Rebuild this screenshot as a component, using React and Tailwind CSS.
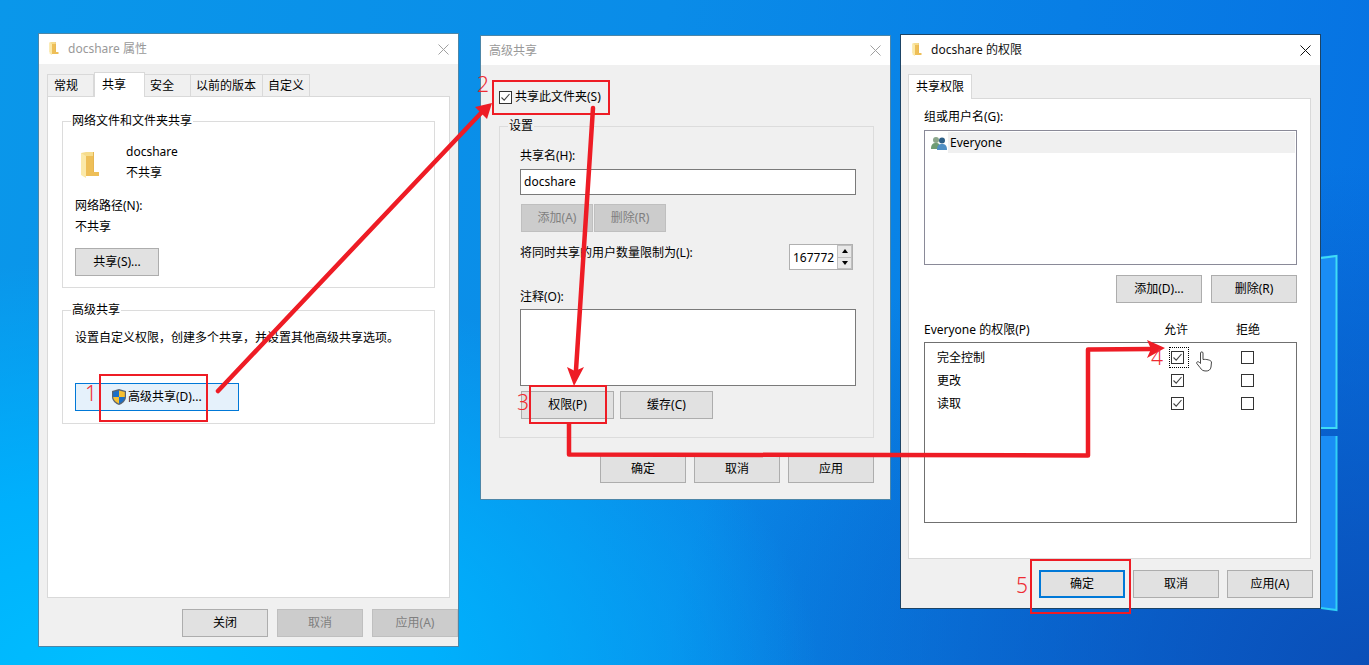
import React from 'react';

const btn = 'flex items-center justify-center h-[28px] border text-[12px] leading-none shrink-0';

function Btn({ w = 'w-[86px]', disabled, primary, children }) {
  const look = disabled
    ? 'bg-[#cccccc] border-[#bfbfbf] text-[#7f7f7f]'
    : primary
      ? 'bg-[#e1e1e1] border-2 border-[#0078d7] text-black'
      : 'bg-[#e1e1e1] border-[#adadad] text-black';
  return <div className={`${btn} ${w} ${look}`}>{children}</div>;
}

function FolderIcon({ className }) {
  return (
    <svg viewBox="0 0 18 26" className={className}>
      <path d="M0 1 L5 0 L12 0 L12 20 L0 20 Z" fill="#f6dc8c" />
      <path d="M0 1 L5 4 L5 26 L0 23 Z" fill="#fbe9a9" />
      <path d="M5 4 L13 4 L13 20 L18 20 L18 24 L5 24 Z" fill="#eebf58" />
      <path d="M12 0 L13 0 L13 20 L12 20 Z" fill="#e6b551" />
    </svg>
  );
}

function CloseX({ active }) {
  return (
    <svg viewBox="0 0 11 11" className="w-[11px] h-[11px]">
      <path d="M0.5 0.5 L10.5 10.5 M10.5 0.5 L0.5 10.5" stroke={active ? '#111111' : '#a0a0a0'} strokeWidth="1" fill="none" />
    </svg>
  );
}

function TitleBar({ title, icon, active, h = 'h-[30px]', xPad = 'pr-[9px]', left = 'pl-[10px]' }) {
  return (
    <div className={`${h} ${xPad} ${left} bg-white flex items-center`}>
      {icon && <FolderIcon className="w-[10px] h-[13px] mr-[9px] -mt-[2px]" />}
      <span className={`text-[12px] leading-none ${active ? 'text-[#111111]' : 'text-[#999999]'}`}>{title}</span>
      <div className="ml-auto">
        <CloseX active={active} />
      </div>
    </div>
  );
}

function Tab({ w, active, children }) {
  if (active) {
    return (
      <div className={`${w} h-[25px] relative z-10 bg-white border border-b-0 border-[#d9d9d9] pl-[7px] pt-[2px] text-[12px] leading-[20px] text-black`}>
        {children}
      </div>
    );
  }
  return (
    <div className={`${w} h-[23px] bg-[#f0f0f0] border border-l-0 border-[#d9d9d9] pl-[5px] text-[12px] leading-[21px] text-black`}>
      {children}
    </div>
  );
}

function Group({ label, h, className = '', children }) {
  return (
    <fieldset className={`border border-[#dcdcdc] ${h} ${className}`}>
      <legend className="ml-[8px] px-px text-[12px] leading-[16px] text-black">{label}</legend>
      {children}
    </fieldset>
  );
}

function Line({ className = '', children }) {
  return <div className={`h-[21px] text-[12px] leading-[21px] text-black ${className}`}>{children}</div>;
}

function Check({ checked, className = '' }) {
  return (
    <div className={`w-[13px] h-[13px] border border-[#333333] bg-white shrink-0 ${className}`}>
      {checked && (
        <svg viewBox="0 0 11 11" className="w-[11px] h-[11px]">
          <path d="M1.5 5.5 L4.2 8.2 L9.5 2" stroke="#444444" strokeWidth="1.1" fill="none" />
        </svg>
      )}
    </div>
  );
}

function PermRow({ label, focus }) {
  return (
    <div className="h-[23px] flex items-center pl-[12px]">
      <div className="w-[234px] text-[12px] leading-none text-black">{label}</div>
      <div className="relative">
        <Check checked />
        {focus && <div className="absolute -left-[2px] -top-[4px] w-[20px] h-[21px] border border-dotted border-black" />}
      </div>
      <Check className="ml-[57px]" />
    </div>
  );
}

function PropertiesWindow() {
  return (
    <div className="absolute left-[38px] top-[33px] w-[421px] h-[614px] border border-[#4c86a8] bg-[#f0f0f0]">
      <TitleBar title="docshare 属性" icon />
      <div className="pl-[8px] pt-[8px]">
        <div className="flex items-end h-[25px]">
          <div className="w-[47px] h-[23px] bg-[#f0f0f0] border border-[#d9d9d9] pl-[6px] text-[12px] leading-[21px] text-black">常规</div>
          <Tab w="w-[51px]" active>共享</Tab>
          <Tab w="w-[46px]">安全</Tab>
          <Tab w="w-[72px]">以前的版本</Tab>
          <Tab w="w-[47px]">自定义</Tab>
        </div>
        <div className="w-[403px] h-[502px] -mt-px border border-[#d9d9d9] bg-white px-[14px] pt-[16px]">
          <Group label="网络文件和文件夹共享" h="h-[175px]">
            <div className="pl-[18px] pt-[12px] flex">
              <FolderIcon className="w-[18px] h-[26px] mt-[11px]" />
              <div className="ml-[27px]">
                <Line>docshare</Line>
                <Line>不共享</Line>
              </div>
            </div>
            <div className="pl-[12px] pt-[12px]">
              <Line>网络路径(N):</Line>
              <Line>不共享</Line>
              <div className="mt-[11px]">
                <Btn w="w-[84px]">共享(S)...</Btn>
              </div>
            </div>
          </Group>
          <Group label="高级共享" h="h-[122px]" className="mt-[14px]">
            <div className="pl-[12px] pt-[9px]">
              <Line>设置自定义权限，创建多个共享，并设置其他高级共享选项。</Line>
              <div className="mt-[35px] w-[164px] h-[28px] border border-[#0078d7] bg-[#e5f1fb] flex items-center pl-[36px] text-[12px] leading-none text-black">
                <svg viewBox="0 0 14 16" className="w-[14px] h-[16px] mr-[2px] shrink-0">
                  <path d="M7 0 L14 2 L14 8 C14 12 10 15 7 16 C4 15 0 12 0 8 L0 2 Z" fill="#5a6470" />
                  <path d="M7 1.5 L7 8 L1.2 8 L1.2 3 Z" fill="#1b6fc8" />
                  <path d="M7 1.5 L12.8 3 L12.8 8 L7 8 Z" fill="#f7c031" />
                  <path d="M1.2 8 L7 8 L7 14.6 C4.5 13.6 1.4 11.4 1.2 8 Z" fill="#f7c031" />
                  <path d="M7 8 L12.8 8 C12.6 11.4 9.5 13.6 7 14.6 Z" fill="#1b6fc8" />
                </svg>
                高级共享(D)...
              </div>
            </div>
          </Group>
        </div>
        <div className="flex justify-end pr-px mt-[11px] w-[412px] gap-[9px]">
          <Btn>关闭</Btn>
          <Btn disabled>取消</Btn>
          <Btn disabled>应用(A)</Btn>
        </div>
      </div>
    </div>
  );
}

function AdvancedWindow() {
  return (
    <div className="absolute left-[480px] top-[35px] w-[411px] h-[465px] border border-[#4c86a8] bg-[#f0f0f0]">
      <TitleBar title="高级共享" h="h-[29px]" left="pl-[8px]" />
      <div className="pl-[18px] pt-[22px]">
        <div className="h-[20px] flex items-center text-[12px] leading-none text-black">
          <Check checked />
          <span className="ml-[3px]">共享此文件夹(S)</span>
        </div>
        <Group label="设置" h="h-[320px]" className="w-[375px] mt-[11px]">
          <div className="pl-[20px] pt-[11px]">
            <Line>共享名(H):</Line>
            <div className="mt-[3px] w-[336px] h-[26px] border border-[#7a7a7a] bg-white pl-[3px] text-[12px] leading-[24px] text-black">docshare</div>
            <div className="flex gap-px mt-[9px] pl-px">
              <Btn w="w-[72px]" disabled>添加(A)</Btn>
              <Btn w="w-[72px]" disabled>删除(R)</Btn>
            </div>
            <div className="flex mt-[12px] h-[26px]">
              <div className="w-[269px] text-[12px] leading-[18px] text-black">将同时共享的用户数量限制为(L):</div>
              <div className="w-[64px] h-[26px] border border-[#b0b0b0] bg-white flex">
                <div className="w-[47px] pl-[3px] text-[12px] leading-[26px] text-black overflow-hidden">167772</div>
                <div className="flex-1 flex flex-col bg-[#f0f0f0]">
                  <div className="flex-1 border border-[#c0c0c0] bg-[#e8e8e8] flex items-center justify-center">
                    <div className="w-0 h-0 border-x-[3px] border-x-transparent border-b-[4px] border-b-black" />
                  </div>
                  <div className="flex-1 border border-t-0 border-[#c0c0c0] bg-[#e8e8e8] flex items-center justify-center">
                    <div className="w-0 h-0 border-x-[3px] border-x-transparent border-t-[4px] border-t-black" />
                  </div>
                </div>
              </div>
            </div>
            <Line className="mt-[16px]">注释(O):</Line>
            <div className="mt-[2px] w-[336px] h-[77px] border border-[#7a7a7a] bg-white" />
            <div className="flex gap-[6px] mt-[5px] pl-px">
              <Btn w="w-[93px]">权限(P)</Btn>
              <Btn w="w-[93px]">缓存(C)</Btn>
            </div>
          </div>
        </Group>
        <div className="flex justify-end w-[375px] mt-[17px] gap-[8px]">
          <Btn>确定</Btn>
          <Btn>取消</Btn>
          <Btn>应用</Btn>
        </div>
      </div>
    </div>
  );
}

function PermissionWindow() {
  return (
    <div className="absolute left-[900px] top-[34px] w-[421px] h-[575px] border border-[#1d4466] bg-[#f0f0f0]">
      <TitleBar title="docshare 的权限" icon active left="pl-[11px]" />
      <div className="pl-[7px] pt-[9px]">
        <div className="flex items-end h-[25px]">
          <Tab w="w-[64px]" active>共享权限</Tab>
        </div>
        <div className="w-[403px] h-[461px] -mt-px border border-[#d9d9d9] bg-white pl-[15px] pt-[7px]">
          <Line>组或用户名(G):</Line>
          <div className="mt-[3px] w-[373px] h-[135px] border border-[#8a8a98] p-px">
            <div className="h-[21px] flex items-center">
              <svg viewBox="0 0 16 14" className="w-[16px] h-[14px] ml-[5px] shrink-0">
                <circle cx="5" cy="4" r="3" fill="#8aa58a" />
                <path d="M0 13 C0 8 2 7 5 7 C8 7 9 8 9 13 Z" fill="#6f9c74" />
                <circle cx="11" cy="4.5" r="3" fill="#2d5f86" />
                <path d="M6 14 C6 9 8 8 11 8 C14 8 16 9 16 14 Z" fill="#4f8fc4" />
              </svg>
              <div className="flex-1 h-[21px] bg-[#f0f0f0] ml-px pl-[2px] text-[12px] leading-[21px] text-black">Everyone</div>
            </div>
          </div>
          <div className="flex justify-end w-[373px] gap-[9px] mt-[10px]">
            <Btn>添加(D)...</Btn>
            <Btn>删除(R)</Btn>
          </div>
          <div className="flex mt-[17px] h-[20px] items-center text-[12px] leading-none text-black">
            <div className="w-[240px]">Everyone 的权限(P)</div>
            <div className="w-[72px]">允许</div>
            <div>拒绝</div>
          </div>
          <div className="mt-[2px] w-[373px] h-[181px] border border-[#707070] pt-[3px]">
            <PermRow label="完全控制" focus />
            <PermRow label="更改" />
            <PermRow label="读取" />
          </div>
        </div>
        <div className="flex w-[405px] justify-end gap-[8px] mt-[11px]">
          <Btn primary>确定</Btn>
          <Btn>取消</Btn>
          <Btn>应用(A)</Btn>
        </div>
      </div>
    </div>
  );
}

function Annotations() {
  const red = '#ee1c25';
  return (
    <svg viewBox="0 0 1369 665" className="absolute left-0 top-0 w-[1369px] h-[665px] pointer-events-none">
      <rect x="100" y="375" width="107" height="46" fill="none" stroke={red} strokeWidth="2" />
      <rect x="493" y="81" width="116" height="33" fill="none" stroke={red} strokeWidth="2" />
      <rect x="530" y="386" width="76" height="37" fill="none" stroke={red} strokeWidth="2" />
      <rect x="1031" y="560" width="99" height="53" fill="none" stroke={red} strokeWidth="2" />
      <path d="M218 391 L482 112" stroke={red} strokeWidth="4.5" strokeLinecap="round" fill="none" />
      <path d="M492 103 L475 107 L487 119 Z" fill={red} />
      <path d="M593 108 L576 370" stroke={red} strokeWidth="4.5" strokeLinecap="round" fill="none" />
      <path d="M574 386 L567 367 L575 371 L584 367 Z" fill={red} />
      <path d="M569 423 L569 454.5 L1088 455.5 L1088 349.5 L1152 349" stroke={red} strokeWidth="4.5" strokeLinejoin="round" fill="none" />
      <path d="M1165 348 L1147 340 L1151 349 L1147 358 Z" fill={red} />
      {/* hand cursor */}
      <path
        d="M1200.5 353 C1200.5 351.5 1203 351.5 1203 353 L1203 359.5 C1206 359 1211 360 1211.5 362 L1211 367 C1210.5 370 1208.5 371 1206 371 C1203 371 1201.5 370 1200 367.5 L1196.8 363.5 C1196 362 1198 361 1199.5 362.5 L1200.5 363.5 Z"
        fill="#ffffff"
        stroke="#333333"
        strokeWidth="0.9"
      />
    </svg>
  );
}

function StepNumber({ className, children }) {
  return (
    <div className={`absolute text-[21px] leading-none text-[#ee2b33] font-light [font-family:'Noto_Sans',sans-serif] ${className}`}>
      {children}
    </div>
  );
}

export default function App() {
  return (
    <div className="relative w-[1369px] h-[665px] overflow-hidden [font-family:'Noto_Sans','Noto_Sans_CJK_SC',sans-serif] bg-[radial-gradient(ellipse_700px_420px_at_120px_680px,#00bfff_0%,#00b0fc_45%,transparent_100%),radial-gradient(ellipse_700px_500px_at_1369px_665px,#0a4fb8_0%,transparent_100%),linear-gradient(100deg,#0a97ea_0%,#0a8ce8_45%,#0670e2_100%)]">
      {/* wallpaper logo, mostly behind the last window */}
      <svg viewBox="0 0 1369 665" className="absolute left-0 top-0 w-[1369px] h-[665px]">
        <path d="M1300 258 L1336 255 L1336 428 L1300 428 Z" fill="#1a8df5" />
        <path d="M1300 436 L1336 436 L1336 610 L1300 606 Z" fill="#1a8df5" />
        <path d="M1321 258 L1336.5 256 L1336.5 428 L1321 428" fill="none" stroke="#3fdcf5" strokeWidth="2" />
        <path d="M1336.5 436 L1336.5 610 L1321 608" fill="none" stroke="#30d0f5" strokeWidth="2" />
      </svg>
      <PropertiesWindow />
      <AdvancedWindow />
      <PermissionWindow />
      <Annotations />
      <StepNumber className="left-[85px] top-[383px]">1</StepNumber>
      <StepNumber className="left-[477px] top-[74px]">2</StepNumber>
      <StepNumber className="left-[517px] top-[392px]">3</StepNumber>
      <StepNumber className="left-[1151px] top-[347px]">4</StepNumber>
      <StepNumber className="left-[1016px] top-[575px]">5</StepNumber>
    </div>
  );
}
